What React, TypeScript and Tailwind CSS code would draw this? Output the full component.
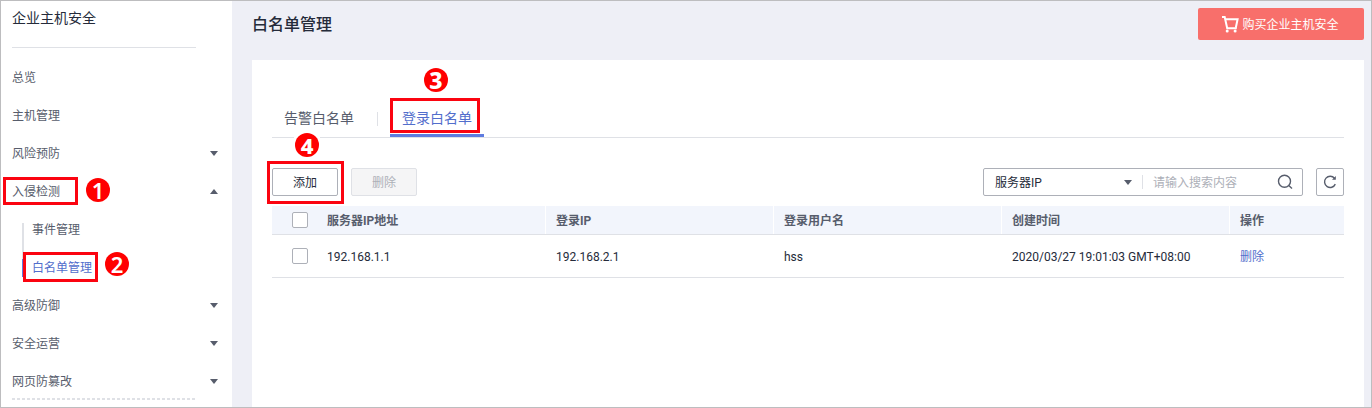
import React from "react";

type NavItem = { label: string; arrow?: "up" | "down"; children?: { label: string; active?: boolean }[] };

const nav: NavItem[] = [
  { label: "总览" },
  { label: "主机管理" },
  { label: "风险预防", arrow: "down" },
  { label: "入侵检测", arrow: "up", children: [{ label: "事件管理" }, { label: "白名单管理", active: true }] },
  { label: "高级防御", arrow: "down" },
  { label: "安全运营", arrow: "down" },
  { label: "网页防篡改", arrow: "down" },
];

function Arrow({ up = false }: { up?: boolean }) {
  return (
    <svg width="8" height="5" viewBox="0 0 8 5" fill="#575d6c">
      <path d={up ? "M4 0 L8 5 H0 Z" : "M0 0 H8 L4 5 Z"} />
    </svg>
  );
}

function Sidebar() {
  return (
    <aside className="flex w-[231px] shrink-0 flex-col bg-white pl-[11px]">
      <div className="flex h-[46px] w-[184px] items-start pt-[7px] text-[14px] leading-5 text-[#252b3a]">企业主机安全</div>
      <div className="mb-[11px] h-px w-[184px] shrink-0 bg-[#dfe1e6]" />
      <nav className="flex flex-col">
        {nav.map((item) => (
          <div key={item.label}>
            <div className="flex h-[38px] items-center justify-between pr-[14px]">
              <span>{item.label}</span>
              {item.arrow && <span className="pb-[2px]"><Arrow up={item.arrow === "up"} /></span>}
            </div>
            {item.children && (
              <div className="relative ml-[10px]">
                <div className="absolute top-[12px] left-0 h-[54px] w-[2px] bg-[#dfe1e6]" />
                {item.children.map((c) => (
                  <div key={c.label} className="relative flex h-[38px] items-center pl-[10px]">
                    {c.active && <div className="absolute top-[10px] left-0 h-[18px] w-[2px] bg-[#5e7ce0]" />}
                    <span className={c.active ? "text-[#526ecc]" : ""}>{c.label}</span>
                  </div>
                ))}
              </div>
            )}
          </div>
        ))}
      </nav>
      <svg className="-mt-[3px] shrink-0" width="184" height="2" viewBox="0 0 184 2">
        <path d="M0 1 H184" stroke="#dfe1e6" strokeWidth="2" strokeDasharray="3 2" />
      </svg>
    </aside>
  );
}

function Cart() {
  return (
    <svg width="17" height="17" viewBox="0 0 17 17" fill="none" stroke="#fff" strokeWidth="2">
      <path d="M0 1.1 H2.7 L5.2 12.2 H14.8" />
      <path d="M3.4 3.3 H15.6 L13.8 11.8" />
      <circle cx="5.2" cy="15" r="1.5" fill="#fff" stroke="none" />
      <circle cx="13.1" cy="15" r="1.5" fill="#fff" stroke="none" />
    </svg>
  );
}

function Checkbox() {
  return <span className="block size-4 rounded-[2px] border border-[#adb0b8] bg-white" />;
}

function Toolbar() {
  return (
    <div className="flex h-7 items-center text-[#252b3a]">
      <button className="flex h-7 w-[66px] items-center justify-center rounded-[2px] border border-[#adb0b8] bg-white pt-px">添加</button>
      <button className="ml-[13px] flex h-7 w-[66px] items-center justify-center rounded-[2px] border border-[#dfe1e6] bg-[#f5f5f6] pt-px text-[#adb0b8]">删除</button>
      <div className="ml-auto flex h-7 w-[320px] items-center rounded-[2px] border border-[#adb0b8] pl-[11px]">
        <span className="w-[129px] pt-px">服务器IP</span>
        <Arrow />
        <span className="ml-[10px] h-[14px] w-px bg-[#dfe1e6]" />
        <span className="ml-[10px] pt-px text-[#adb0b8]">请输入搜索内容</span>
        <svg className="mr-[9px] ml-auto" width="16" height="16" viewBox="0 0 16 16" fill="none" stroke="#575d6c" strokeWidth="1.4">
          <circle cx="7.5" cy="7.2" r="6" />
          <path d="M11.8 11.6 L15 14.5" />
        </svg>
      </div>
      <button className="ml-[13px] flex size-7 items-center justify-center rounded-[2px] border border-[#adb0b8]">
        <svg width="14" height="14" viewBox="0 0 14 14" fill="none" stroke="#575d6c" strokeWidth="1.4">
          <path d="M12.3 9.1 A5.6 5.6 0 1 1 11.5 3.3" />
          <path d="M12.8 1 V4.8 H9 Z" fill="#575d6c" stroke="none" />
        </svg>
      </button>
    </div>
  );
}

const columns = ["服务器IP地址", "登录IP", "登录用户名", "创建时间", "操作"];
const row = ["192.168.1.1", "192.168.2.1", "hss", "2020/03/27 19:01:03 GMT+08:00", "删除"];
const grid = "grid grid-cols-[45px_229px_228px_228px_228px_114px] items-center border-b border-[#dfe1e6]";

function Table() {
  return (
    <div className="mt-[10px]">
      <div className={`${grid} h-[29px] bg-[#f2f5fc] font-bold text-[#575d6c]`}>
        <div className="pl-5"><Checkbox /></div>
        {columns.map((c, i) => (
          <div key={c} className={i < 4 ? "flex h-7 items-center border-r border-white pt-[2px] pl-[10px]" : "flex h-7 items-center pt-[2px] pl-[10px]"}>{c}</div>
        ))}
      </div>
      <div className={`${grid} h-[43px] text-[#252b3a]`}>
        <div className="pl-5"><Checkbox /></div>
        {row.map((c, i) => (
          <div key={c} className={i < 4 ? "pt-[2px] pl-[10px] whitespace-nowrap" : "pt-[2px] pl-[10px] text-[#526ecc]"}>{c}</div>
        ))}
      </div>
    </div>
  );
}

function Annotations() {
  const badge = "absolute flex size-6 items-center justify-center rounded-full bg-[#ff0000] font-['Noto_Sans',sans-serif] leading-none text-white";
  return (
    <div className="pointer-events-none absolute inset-0">
      <div className="absolute top-[176px] left-[2px] h-[28px] w-[75px] border-3 border-[#fb0410]" />
      <div className="absolute top-[251px] left-[22px] h-[30px] w-[75px] border-3 border-[#fb0410]" />
      <div className="absolute top-[97px] left-[389px] h-[35px] w-[90px] border-3 border-[#fb0410]" />
      <div className="absolute top-[160px] left-[266px] h-[43px] w-[77px] border-3 border-[#fb0410]" />
      <div className="absolute top-[132px] left-[293px] h-[26px] w-[26px] bg-white" />
      <div className={`${badge} top-[177px] left-[85px] text-[22px] font-semibold`}>1</div>
      <div className={`${badge} top-[251px] left-[104px] text-[22px] font-semibold`}>2</div>
      <div className={`${badge} top-[67px] left-[423px] text-[23px] font-extrabold`}>3</div>
      <div className={`${badge} top-[132px] left-[294px] text-[22px] font-extrabold`}>4</div>
    </div>
  );
}

export default function App() {
  return (
    <div className="relative flex h-[408px] w-[1372px] overflow-hidden border border-[#bdbdbf] bg-[#eeeff6] font-[Roboto,'Noto_Sans_CJK_SC',sans-serif] text-[12px] leading-[18px] text-[#575d6c]">
      <Sidebar />
      <main className="flex flex-1 flex-col pr-[7px] pl-5">
        <header className="flex h-[59px] shrink-0 items-start justify-between pt-[7px]">
          <h1 className="flex h-8 items-center pt-[2px] text-[16px] font-medium text-[#252b3a]">白名单管理</h1>
          <button className="flex h-8 w-[166px] items-center justify-center gap-[3px] rounded-[2px] bg-[#f86f6b] pr-px text-white">
            <Cart />
            <span className="pt-[2px]">购买企业主机安全</span>
          </button>
        </header>
        <section className="flex-1 bg-white px-5 pt-[38px]">
          <div className="flex h-[40px] items-stretch border-b border-[#dfe1e6] text-[14px]">
            <div className="flex w-[105px] items-center pl-3">告警白名单</div>
            <div className="mt-[14px] h-[14px] w-px bg-[#dfe1e6]" />
            <div className="relative ml-3 flex w-[94px] items-center justify-center text-[#526ecc]">
              登录白名单
              <span className="absolute bottom-0 left-0 h-[3px] w-full bg-[#5e7ce0]" />
            </div>
          </div>
          <div className="pt-[30px]">
            <Toolbar />
          </div>
          <Table />
        </section>
      </main>
      <Annotations />
    </div>
  );
}
